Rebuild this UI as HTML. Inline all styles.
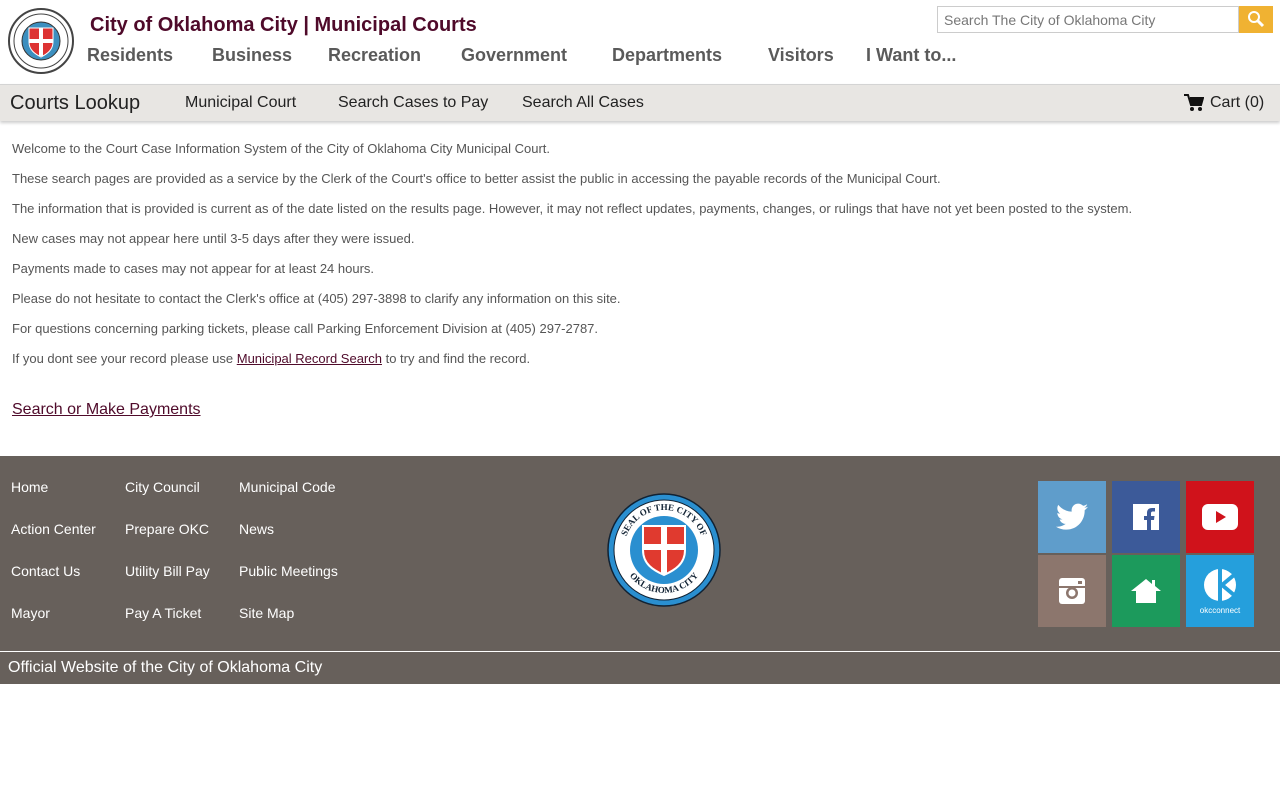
<!DOCTYPE html>
<html><head><meta charset="utf-8"><style>
*{box-sizing:border-box;margin:0;padding:0}
body{width:1280px;height:800px;background:#fff;font-family:"Liberation Sans",Arial,sans-serif;position:relative;overflow:hidden}
.abs{position:absolute}
.title{left:90px;top:14px;font-size:20px;font-weight:bold;color:#4f0a2a}
.nav span{position:absolute;top:45px;font-size:18px;font-weight:bold;color:#5a5a5a}
.search{left:937px;top:6px;width:302px;height:27px;border:1px solid #ccc;font-size:14px;color:#777;padding:5px 6px}
.sbtn{left:1239px;top:6px;width:34px;height:27px;background:#f0b232}
.bar{left:0;top:84px;width:1280px;height:37px;background:#e8e6e3;border-top:1px solid #d4d4d4;box-shadow:0 2px 3px rgba(0,0,0,.2)}
.bar span{position:absolute;top:9px;font-size:16px;color:#222}
.content p{position:absolute;left:12px;font-size:13px;color:#555}
.footer{left:0;top:456px;width:1280px;height:228px;background:#67605b}
.fl{position:absolute;font-size:14px;color:#fff}
.tile{position:absolute;width:68px;height:72px;display:flex;align-items:center;justify-content:center}
</style></head><body>
<svg class="abs" style="left:8px;top:8px" width="66" height="66" viewBox="0 0 66 66">
<circle cx="33" cy="33" r="32" fill="#fff" stroke="#444" stroke-width="2"/>
<circle cx="33" cy="33" r="27" fill="none" stroke="#444" stroke-width="1"/>
<circle cx="33" cy="33" r="19" fill="#3c8fbf" stroke="#333"/>
<path d="M21 20h24v14c0 8-6 12-12 15-6-3-12-7-12-15z" fill="#d33" stroke="#fff"/>
<rect x="31" y="20" width="4" height="28" fill="#fff"/><rect x="21" y="31" width="24" height="4" fill="#fff"/>
</svg>
<div class="abs title">City of Oklahoma City | Municipal Courts</div>
<div class="nav"><span style="left:87px">Residents</span><span style="left:212px">Business</span><span style="left:328px">Recreation</span><span style="left:461px">Government</span><span style="left:612px">Departments</span><span style="left:768px">Visitors</span><span style="left:866px">I Want to...</span></div>
<div class="abs search">Search The City of Oklahoma City</div>
<div class="abs sbtn"><svg width="34" height="27"><circle cx="15" cy="11" r="5" fill="none" stroke="#fff" stroke-width="2"/><path d="M19 15l5 5" stroke="#fff" stroke-width="3"/></svg></div>
<div class="abs bar">
<span style="left:10px;top:7px;font-size:20px">Courts Lookup</span>
<span style="left:185px">Municipal Court</span><span style="left:338px">Search Cases to Pay</span><span style="left:522px">Search All Cases</span>
<svg class="abs" style="left:1184px;top:9px" width="20" height="18" viewBox="0 0 20 18"><path d="M0 1h4l3 10h10l2-7H6" fill="none" stroke="#111" stroke-width="2"/><path d="M5 4h14l-2 7H7z" fill="#111"/><circle cx="8" cy="15" r="2" fill="#111"/><circle cx="16" cy="15" r="2" fill="#111"/></svg>
<span style="left:1210px">Cart (0)</span>
</div>
<div class="content">
<p style="top:141px">Welcome to the Court Case Information System of the City of Oklahoma City Municipal Court.</p>
<p style="top:171px">These search pages are provided as a service by the Clerk of the Court's office to better assist the public in accessing the payable records of the Municipal Court.</p>
<p style="top:201px">The information that is provided is current as of the date listed on the results page. However, it may not reflect updates, payments, changes, or rulings that have not yet been posted to the system.</p>
<p style="top:231px">New cases may not appear here until 3-5 days after they were issued.</p>
<p style="top:261px">Payments made to cases may not appear for at least 24 hours.</p>
<p style="top:291px">Please do not hesitate to contact the Clerk's office at (405) 297-3898 to clarify any information on this site.</p>
<p style="top:321px">For questions concerning parking tickets, please call Parking Enforcement Division at (405) 297-2787.</p>
<p style="top:351px">If you dont see your record please use <u style="color:#4f0a2a">Municipal Record Search</u> to try and find the record.</p>
<p style="top:401px;font-size:16px;color:#4f0a2a;text-decoration:underline">Search or Make Payments</p>
</div>
<div class="abs footer">
<span class="fl" style="left:11px;top:23px">Home</span><span class="fl" style="left:125px;top:23px">City Council</span><span class="fl" style="left:239px;top:23px">Municipal Code</span>
<span class="fl" style="left:11px;top:65px">Action Center</span><span class="fl" style="left:125px;top:65px">Prepare OKC</span><span class="fl" style="left:239px;top:65px">News</span>
<span class="fl" style="left:11px;top:107px">Contact Us</span><span class="fl" style="left:125px;top:107px">Utility Bill Pay</span><span class="fl" style="left:239px;top:107px">Public Meetings</span>
<span class="fl" style="left:11px;top:149px">Mayor</span><span class="fl" style="left:125px;top:149px">Pay A Ticket</span><span class="fl" style="left:239px;top:149px">Site Map</span>
<svg class="abs" style="left:607px;top:37px" width="114" height="114" viewBox="0 0 114 114">
<defs><path id="ta" d="M17 57a40 40 0 0 1 80 0"/><path id="tb" d="M14 57a43 43 0 0 0 86 0"/></defs>
<circle cx="57" cy="57" r="56" fill="#2a8fd0" stroke="#123" stroke-width="1.5"/>
<circle cx="57" cy="57" r="50" fill="#fff" stroke="#123"/>
<circle cx="57" cy="57" r="34" fill="#2a8fd0"/>
<path d="M36 33h42v24c0 14-10 20-21 25-11-5-21-11-21-25z" fill="#e03a2f" stroke="#fff" stroke-width="2"/>
<rect x="54" y="33" width="6" height="48" fill="#fff"/><rect x="36" y="51" width="42" height="6" fill="#fff"/>
<text font-size="9" font-weight="bold" fill="#123" font-family="Liberation Serif"><textPath href="#ta" startOffset="50%" text-anchor="middle">SEAL OF THE CITY OF</textPath></text>
<text font-size="9" font-weight="bold" fill="#123" font-family="Liberation Serif"><textPath href="#tb" startOffset="50%" text-anchor="middle">OKLAHOMA CITY</textPath></text>
</svg>
<div class="tile" style="left:1038px;top:25px;background:#5f9dcb"><svg width="32" height="28" viewBox="0 0 24 20"><path d="M24 2.3c-.9.4-1.8.7-2.8.8 1-.6 1.8-1.6 2.2-2.7-1 .6-2 1-3.1 1.2C19.3.6 18 0 16.6 0c-2.7 0-4.9 2.2-4.9 4.9 0 .4 0 .8.1 1.1C7.7 5.8 4.1 3.9 1.7.9c-.4.7-.7 1.6-.7 2.5 0 1.7.9 3.2 2.2 4.1-.8 0-1.6-.2-2.200-.6 0 2.4 1.7 4.4 3.9 4.8-.7.2-1.5.2-2.200.1.6 2 2.4 3.4 4.6 3.4-1.700 1.3-3.8 2.1-6.1 2.1H0c2.2 1.4 4.8 2.2 7.5 2.2 9.1 0 14-7.5 14-14v-.6c1-.7 1.8-1.6 2.5-2.6z" fill="#fff"/></svg></div>
<div class="tile" style="left:1112px;top:25px;background:#3c5a99"><svg width="26" height="26"><rect width="26" height="26" fill="#fff"/><path d="M18 26V16h3l.5-4H18V9.5c0-1 .3-2 2-2h2V4h-3c-3.5 0-5 2-5 5v3h-3v4h3v10z" fill="#3c5a99"/></svg></div>
<div class="tile" style="left:1186px;top:25px;background:#d0121b"><svg width="36" height="26"><rect width="36" height="26" rx="6" fill="#fff"/><path d="M14 7l10 6-10 6z" fill="#d0121b"/></svg></div>
<div class="tile" style="left:1038px;top:99px;background:#8c766d"><svg width="26" height="26"><rect width="26" height="26" rx="3" fill="#fff"/><rect x="0" y="8" width="26" height="2" fill="#8c766d"/><circle cx="13" cy="15" r="6" fill="#8c766d"/><circle cx="13" cy="15" r="3.5" fill="#fff"/><rect x="19" y="3" width="4" height="3" fill="#8c766d"/></svg></div>
<div class="tile" style="left:1112px;top:99px;background:#1c9a5c"><svg width="30" height="26"><path d="M15 1L0 13h5v12h20V13h5L24 8V2h-3v4z" fill="#fff"/></svg></div>
<div class="tile" style="left:1186px;top:99px;background:#259fdc;flex-direction:column"><svg width="34" height="36"><circle cx="17" cy="17" r="16" fill="#fff"/><path d="M17 1v32" stroke="#259fdc" stroke-width="4"/><path d="M19 17l12-10M19 17l12 10" stroke="#259fdc" stroke-width="4"/></svg><span style="color:#fff;font-size:8px;margin-top:2px">okcconnect</span></div>
<div class="abs" style="left:0;top:195px;width:1280px;height:1px;background:#fff"></div>
<span class="fl" style="left:8px;top:203px;font-size:16px">Official Website of the City of Oklahoma City</span>
</div>
</body></html>
